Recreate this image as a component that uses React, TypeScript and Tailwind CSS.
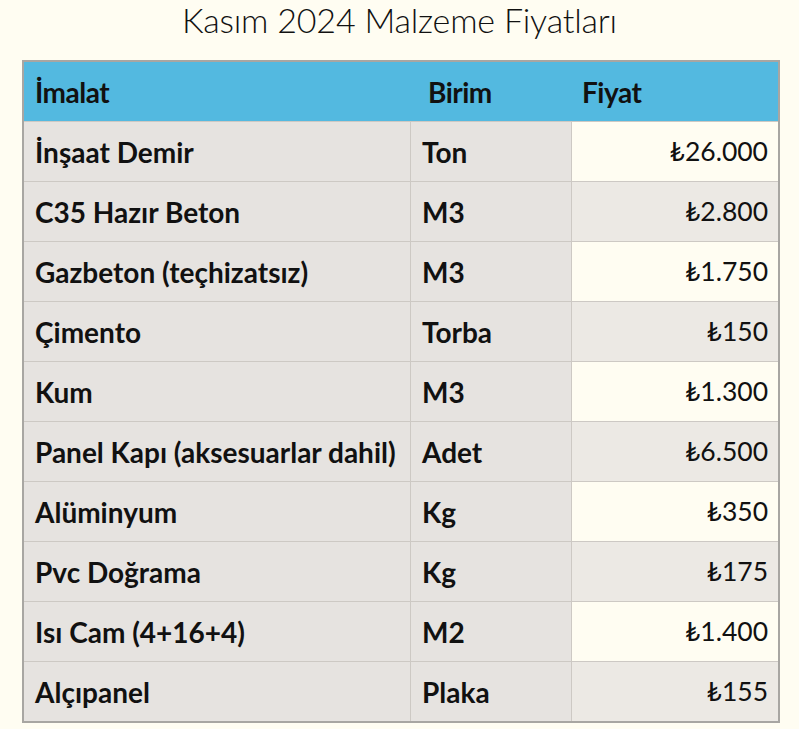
import React from 'react'

interface Row {
  name: string
  unit: string
  price: string
}

const ROWS: Row[] = [
  { name: 'İnşaat Demir', unit: 'Ton', price: '₺26.000' },
  { name: 'C35 Hazır Beton', unit: 'M3', price: '₺2.800' },
  { name: 'Gazbeton (teçhizatsız)', unit: 'M3', price: '₺1.750' },
  { name: 'Çimento', unit: 'Torba', price: '₺150' },
  { name: 'Kum', unit: 'M3', price: '₺1.300' },
  { name: 'Panel Kapı (aksesuarlar dahil)', unit: 'Adet', price: '₺6.500' },
  { name: 'Alüminyum', unit: 'Kg', price: '₺350' },
  { name: 'Pvc Doğrama', unit: 'Kg', price: '₺175' },
  { name: 'Isı Cam (4+16+4)', unit: 'M2', price: '₺1.400' },
  { name: 'Alçıpanel', unit: 'Plaka', price: '₺155' },
]

export default function App() {
  return (
    <div className="min-h-[729px] bg-[#fffdf2] font-['Lato','Noto_Sans',sans-serif] text-[#111]">
      {/* Title */}
      <h1 className="h-[60px] pt-0 text-center text-[34px] font-light leading-[40px] tracking-[-0.2px]">
        Kasım 2024 Malzeme Fiyatları
      </h1>

      {/* Table */}
      <div className="ml-[22px] w-[758px] border-2 border-[#a8a6a2]">
        <div className="grid h-[59px] grid-cols-[387px_161px_1fr] items-center bg-[#53b9e0] text-[28px] font-bold tracking-[-0.5px]">
          <div className="pl-[11px]">İmalat</div>
          <div className="pl-[17px]">Birim</div>
          <div className="pl-[10px]">Fiyat</div>
        </div>

        {ROWS.map((row, i) => (
          <div
            key={row.name}
            className="grid h-[60px] grid-cols-[387px_161px_1fr] border-t border-[#cdc9c4]"
          >
            <div className="flex items-center border-r border-[#cdc9c4] bg-[#e6e3e0] pl-[11px] text-[28px] font-bold">
              {row.name}
            </div>
            <div className="flex items-center border-r border-[#cdc9c4] bg-[#e6e3e0] pl-[11px] text-[28px] font-bold">
              {row.unit}
            </div>
            <div
              className={
                i % 2 === 0
                  ? 'flex items-center justify-end bg-[#fffdf2] pr-[10px] text-[26.5px]'
                  : 'flex items-center justify-end bg-[#ece9e4] pr-[10px] text-[26.5px]'
              }
            >
              {row.price}
            </div>
          </div>
        ))}
      </div>
    </div>
  )
}
